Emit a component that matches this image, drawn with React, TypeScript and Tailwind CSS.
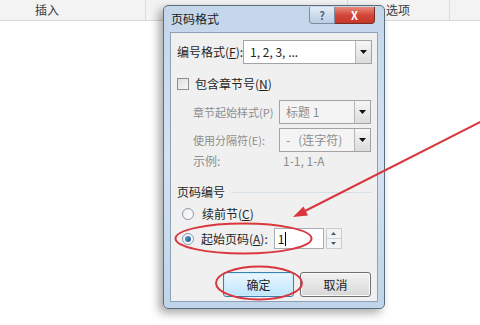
import React from "react";

const font = { fontFamily: '"Noto Sans CJK SC", "Microsoft YaHei", sans-serif' };

function DropArrow() {
  return (
    <span className="flex h-full w-[16px] shrink-0 items-center justify-center border-l border-[#b5b5b5] bg-gradient-to-b from-[#f6f6f6] to-[#dcdcdc]">
      <svg width="7" height="4" viewBox="0 0 7 4">
        <path d="M0 0h7L3.5 4z" fill="#111" />
      </svg>
    </span>
  );
}

function Select({ value, disabled, width }: { value: string; disabled?: boolean; width: string }) {
  return (
    <div
      className={`flex h-[24px] ${width} shrink-0 items-center border border-[#a3a3a3] ${disabled ? "bg-[#f4f4f4]" : "bg-white"}`}
    >
      <span className={`flex-1 truncate whitespace-pre pl-[6px] ${disabled ? "text-[#8d8d8d]" : "text-[#222]"}`}>{value}</span>
      <DropArrow />
    </div>
  );
}

function Radio({ checked }: { checked?: boolean }) {
  return (
    <span className="flex h-[12px] w-[12px] shrink-0 items-center justify-center rounded-full border border-[#8e9aa8] bg-gradient-to-br from-[#e9ecef] to-[#ffffff]">
      {checked ? <span className="h-[6px] w-[6px] rounded-full bg-gradient-to-br from-[#58a5db] to-[#1b4f86]" /> : null}
    </span>
  );
}

function Button({ label, primary }: { label: string; primary?: boolean }) {
  return (
    <button
      className={`flex h-[25px] w-[71px] items-center justify-center rounded-[3px] border text-[12px] text-[#222] ${
        primary
          ? "border-[#3c7fb1] bg-gradient-to-b from-[#eaf6fd] to-[#bee6fd] shadow-[inset_0_0_0_1px_#cdecfc]"
          : "border-[#707070] bg-gradient-to-b from-[#f2f2f2] to-[#d8d8d8] shadow-[inset_0_0_0_1px_#fbfbfb]"
      }`}
    >
      {label}
    </button>
  );
}

export default function App() {
  return (
    <div className="relative h-[325px] w-[480px] overflow-hidden whitespace-nowrap bg-white text-[12px] leading-[18px]" style={font}>
      {/* ribbon tab strip behind the dialog */}
      <div className="flex h-[21px] border-b border-[#d9d9d9] bg-[#f3f3f3] text-[#3a3a3a]">
        <div className="flex w-[146px] items-center border-r border-[#dcdcdc] pl-[35px]">插入</div>
        <div className="flex w-[202px] items-center border-r border-[#dcdcdc]" />
        <div className="flex w-[102px] items-center border-r border-[#dcdcdc] pl-[38px]">选项</div>
        <div className="flex-1" />
      </div>

      {/* dialog window */}
      <div className="absolute left-[163px] top-[5px] flex h-[304px] w-[222px] flex-col rounded-[5px] border border-[#5d6b7c] bg-gradient-to-b from-[#c3d6ea] via-[#d4e3f2] to-[#c0d4e9] px-[6px] pb-[6px] shadow-[-4px_4px_10px_rgba(0,0,0,0.35)]">
        <div className="relative flex h-[26px] items-center">
          <span className="pl-[1px] text-[#1a1a1a]">页码格式</span>
          <div className="absolute right-[3px] top-[1px] flex h-[17px]">
            <span className="flex w-[26px] items-center justify-center rounded-bl-[4px] border border-t-0 border-[#7d8ea3] bg-gradient-to-b from-[#e4edf6] to-[#b9cde2] text-[11px] font-bold text-[#4d6580]">
              ?
            </span>
            <span className="flex w-[40px] items-center justify-center rounded-br-[4px] border border-l-0 border-t-0 border-[#7a2b22] bg-gradient-to-b from-[#e58a7c] via-[#d2463a] to-[#c7372b] text-[11px] font-bold text-white">
              X
            </span>
          </div>
        </div>

        <div className="flex flex-1 flex-col border border-[#8da2b8] bg-[#f0f0f0] px-[6px] text-[#1f1f1f]">
          <div className="mt-[7px] flex h-[24px] items-center justify-between">
            <span>
              编号格式(<span className="underline">F</span>):
            </span>
            <Select value="1, 2, 3, ..." width="w-[129px]" />
          </div>

          <div className="mt-[10px] flex h-[20px] items-center gap-[6px]">
            <span className="h-[12px] w-[12px] border border-[#8e8f8f] bg-gradient-to-br from-[#dcdcdc] to-[#f8f8f8]" />
            <span>
              包含章节号(<span className="underline">N</span>)
            </span>
          </div>

          <div className="mt-[6px] flex h-[24px] items-center justify-between pl-[16px] text-[#8d8d8d]">
            <span className="text-[11px]">章节起始样式(P)</span>
            <Select value="标题 1" disabled width="w-[92px]" />
          </div>

          <div className="mt-[4px] flex h-[24px] items-center justify-between pl-[16px] text-[#8d8d8d]">
            <span className="text-[11px]">使用分隔符(E):</span>
            <Select value="-   (连字符)" disabled width="w-[92px]" />
          </div>

          <div className="flex h-[18px] items-center pl-[16px] text-[#8d8d8d]">
            <span className="w-[90px]">示例:</span>
            <span>1-1, 1-A</span>
          </div>

          <div className="mt-[13px] flex h-[18px] items-center gap-[6px]">
            <span>页码编号</span>
            <span className="h-px flex-1 bg-[#d5dfe5]" />
          </div>

          <div className="mt-[4px] flex h-[18px] items-center gap-[8px] pl-[5px]">
            <Radio />
            <span>
              续前节(<span className="underline">C</span>)
            </span>
          </div>

          <div className="mt-[5px] flex h-[21px] items-center pl-[5px]">
            <Radio checked />
            <span className="ml-[7px]">
              起始页码(<span className="underline">A</span>):
            </span>
            <div className="ml-[6px] flex h-[21px] w-[50px] items-center border border-[#abadb3] bg-white pl-[3px] text-[#111]">
              1<span className="ml-[1px] h-[14px] w-px bg-black" />
            </div>
            <div className="ml-[2px] flex h-[21px] w-[16px] flex-col border border-[#c8cbd0] bg-[#f2f3f5]">
              <span className="flex flex-1 items-center justify-center border-b border-[#d0d3d7]">
                <svg width="5" height="3" viewBox="0 0 5 3">
                  <path d="M0 3h5L2.5 0z" fill="#4a5a6b" />
                </svg>
              </span>
              <span className="flex flex-1 items-center justify-center">
                <svg width="5" height="3" viewBox="0 0 5 3">
                  <path d="M0 0h5L2.5 3z" fill="#4a5a6b" />
                </svg>
              </span>
            </div>
          </div>

          <div className="mt-[23px] flex justify-end gap-[6px]">
            <Button label="确定" primary />
            <Button label="取消" />
          </div>
        </div>
      </div>

      {/* red annotations */}
      <svg className="pointer-events-none absolute left-0 top-0" width="480" height="325" viewBox="0 0 480 325">
        <ellipse cx="243.5" cy="238.5" rx="68" ry="15" fill="none" stroke="#d9363e" strokeWidth="2" />
        <ellipse cx="259" cy="283" rx="43" ry="16.5" fill="none" stroke="#d9363e" strokeWidth="2" />
        <line x1="482" y1="121" x2="304" y2="211.5" stroke="#d9363e" strokeWidth="2" />
        <path d="M293 217L308 215.5L303.5 206.5z" fill="#d9363e" />
      </svg>
    </div>
  );
}
